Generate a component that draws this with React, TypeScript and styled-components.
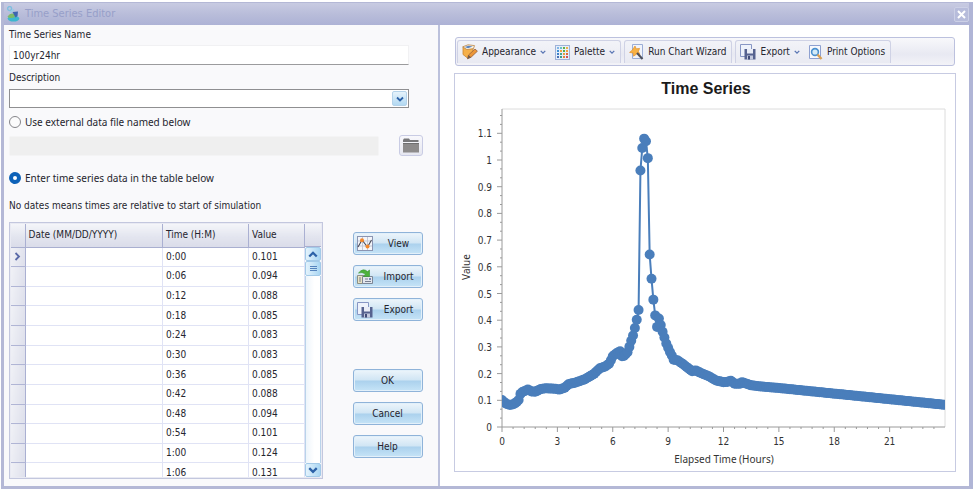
import React from "react";
import styled, { createGlobalStyle, css } from "styled-components";

const GlobalStyle = createGlobalStyle`
  *, *::before, *::after { box-sizing: border-box; }
  body { margin: 0; background: #fff; }
  body, button, input { font-family: "DejaVu Sans Condensed", "DejaVu Sans", sans-serif; font-size: 10px; line-height: 14px; color: #25252e; }
`;

const Page = styled.div`
  min-height: 100vh;
  display: flex;
  padding: 2px 2px 1px 1px;
`;

const Window = styled.main`
  flex: 1;
  min-width: 0;
  display: flex;
  flex-direction: column;
  border: 1px solid #b4b8d6;
  border-width: 1px 1px 3px 3px;
  border-right: 4px solid #b0b5d6;
  background: #fff;
`;

const TitleBar = styled.header`
  display: flex;
  align-items: center;
  gap: 4px;
  height: 22px;
  padding: 0 0 0 2px;
  background: linear-gradient(#c8cbe2, #b9bdda 50%, #adb2d5);
`;

const Title = styled.h1`
  flex: 1;
  margin: 0;
  font-size: 11px;
  line-height: 16px;
  font-weight: 400;
  color: #979fc9;
`;

const CloseButton = styled.button`
  display: grid;
  place-items: center;
  width: 15px;
  height: 15px;
  padding: 0;
  border: 1px solid #ccd0e6;
  border-radius: 2px;
  background: #b7bcdb;
`;

const Body = styled.div`
  flex: 1;
  display: flex;
  min-height: 0;
`;

const EditorPane = styled.section`
  flex: 0 0 436px;
  display: flex;
  flex-direction: column;
  padding: 2px 13px 7px 5px;
  border-right: 2px solid #bcc1dc;
  background: #f9f9fb;
`;

const ChartPane = styled.section`
  flex: 1;
  min-width: 0;
  display: flex;
  flex-direction: column;
  gap: 7px;
  padding: 12px 13px 14px 14px;
  background: #fff;
`;

const FieldLabel = styled.label`
  display: flex;
  align-items: center;
  height: 16px;
`;

const NameInput = styled.input`
  width: 400px;
  height: 20px;
  margin: 2px 0 5px;
  padding: 0 3px;
  border: 1px solid #f1f1f3;
  border-bottom-color: #9b9b9d;
  background: #fff;
`;

const Combo = styled.div`
  display: flex;
  align-items: center;
  width: 400px;
  height: 19px;
  margin: 3px 0 5px;
  border: 1px solid #8f8f91;
  background: #fff;
`;

const ComboInput = styled.input`
  flex: 1;
  height: 100%;
  padding: 0 3px;
  border: 0;
  background: transparent;
`;

const ComboButton = styled.button`
  display: grid;
  place-items: center;
  width: 15px;
  height: 15px;
  margin-right: 1px;
  padding: 0;
  border: 1px solid #b4d3ea;
  border-radius: 2px;
  background: linear-gradient(#e6f3fb, #b3d9f2);
`;

const RadioLabel = styled.label`
  display: flex;
  align-items: center;
  gap: 4px;
  height: 18px;
  font-family: "Noto Sans", sans-serif;
`;

const Radio = styled.input`
  appearance: none;
  width: 12px;
  height: 12px;
  margin: 0;
  border: 1px solid #85858a;
  border-radius: 50%;
  background: #fbfbfc;
  &:checked {
    border: 4px solid #0d62b8;
    background: #fff;
  }
`;

const FileRow = styled.div`
  display: flex;
  align-items: center;
  gap: 20px;
  margin: 4px 0 13px;
`;

const FileInput = styled.input`
  width: 370px;
  height: 20px;
  border: 1px solid #f4f4f5;
  border-radius: 2px;
  background: #efefef;
`;

const FolderButton = styled.button`
  display: grid;
  place-items: center;
  width: 24px;
  height: 21px;
  padding: 0;
  border: 1px solid #c9cce4;
  border-radius: 3px;
  background: linear-gradient(#f8f8fc, #e6e7f0);
`;

const Note = styled.p`
  margin: 12px 0 9px;
`;

const DataArea = styled.div`
  display: flex;
  gap: 30px;
  align-items: flex-start;
`;

const GridFrame = styled.div`
  display: flex;
  width: 314px;
  height: 257px;
  padding: 1px;
  border: 1px solid #c3c7de;
  background: #e9eaf3;
`;

const GridView = styled.div`
  flex: 1;
  overflow: hidden;
`;

const Table = styled.table`
  width: 100%;
  height: 259px;
  border-collapse: collapse;
  table-layout: fixed;
  background: #fff;
`;

const HeadCell = styled.th<{ $w?: number }>`
  width: ${(p) => (p.$w ? `${p.$w}px` : "auto")};
  height: 23px;
  padding: 0 3px;
  text-align: left;
  font-weight: 400;
  border-right: 1px solid #aab0d2;
  border-bottom: 1px solid #a9afd0;
  background: linear-gradient(#f4f5f9, #e3e5ef 55%, #dadce9);
`;

const Cell = styled.td`
  padding: 0 3px;
  line-height: 12px;
  border-right: 1px solid #e0e3f5;
  border-bottom: 1px solid #e0e3f5;
`;

const MarkCell = styled.th`
  padding: 0;
  border-right: 1px solid #aab0d2;
  border-bottom: 1px solid #b0b5d5;
  background: linear-gradient(100deg, #f0f1f6, #dddfeb);
  line-height: 0;
  text-align: center;
`;

const ScrollColumn = styled.div`
  display: flex;
  flex-direction: column;
  width: 16px;
  background: #fff;
`;

const ScrollHead = styled.div`
  height: 23px;
  border-bottom: 1px solid #a9afd0;
  background: linear-gradient(#f4f5f9, #e3e5ef 55%, #dadce9);
`;

const ScrollTrack = styled.div`
  flex: 1;
  border: 1px solid #b9d3ea;
  border-width: 0 1px;
  background: linear-gradient(90deg, #eef5fb, #fff 60%);
`;

const scrollFace = css`
  display: grid;
  place-items: center;
  width: 100%;
  padding: 0;
  border: 1px solid #a3cae8;
  border-radius: 2px;
  background: linear-gradient(90deg, #e4f3fc, #a9d6f3);
`;

const ScrollButton = styled.button`
  ${scrollFace}
  height: 14px;
`;

const ScrollThumb = styled.div`
  ${scrollFace}
  height: 15px;
`;

const ButtonColumn = styled.div`
  display: flex;
  flex-direction: column;
  gap: 10px;
  padding-top: 10px;
`;

const ButtonGroup = styled.div`
  display: flex;
  flex-direction: column;
  gap: 10px;
  & + & { margin-top: 38px; }
`;

const PushButton = styled.button`
  display: flex;
  align-items: center;
  justify-content: center;
  width: 70px;
  height: 23px;
  padding: 0 4px 0 3px;
  border: 1px solid #8fb3d9;
  border-radius: 3px;
  box-shadow: inset 0 0 0 1px #e2f0fa;
  background: linear-gradient(#edf5fb, #d0e5f4 48%, #abd1ed 52%, #c6e4f7);
`;

const ButtonText = styled.span`
  flex: 1;
  padding-left: 6px;
  text-align: center;
`;

const Toolbar = styled.div`
  display: flex;
  gap: 3px;
  height: 29px;
  margin: 0 1px;
  padding: 2px 2px 2px 1px;
  border: 1px solid #bcc1de;
  border-radius: 3px;
  background: linear-gradient(#f8f8fb, #e8e9f2 60%, #f3f3f8);
`;

const ToolGroup = styled.div`
  display: flex;
  align-items: center;
  gap: 9px;
  padding: 0 5px 0 4px;
  border: 1px solid #cfd2e5;
  border-width: 1px 1px 0 1px;
  border-radius: 3px 3px 0 0;
  background: linear-gradient(#f2f3f8, #e9eaf2);
`;

const ToolButton = styled.button`
  display: flex;
  align-items: center;
  gap: 4px;
  padding: 0;
  border: 0;
  background: none;
  white-space: nowrap;
`;

const ChartFrame = styled.div`
  flex: 1;
  border: 1px solid #c7cbe2;
  background: #fff;
`;

const ChartSvg = styled.svg`
  display: block;
  width: 100%;
  height: auto;
  font-family: "DejaVu Sans Condensed", "DejaVu Sans", sans-serif;
  font-size: 10px;
  fill: #333;
`;

const ChartTitle = styled.text`
  font-family: "Liberation Sans", Arial, sans-serif;
  font-size: 16px;
  font-weight: 700;
  fill: #1b1b1b;
`;

const AxisTitle = styled.text`
  font-family: "Noto Sans", sans-serif;
`;

const Chevron = ({ up = false, size = 6, color = "#5a76b4" }: { up?: boolean; size?: number; color?: string }) => (
  <svg width={size} height={size} viewBox="0 0 8 8" aria-hidden="true">
    <path d={up ? "M1 6L4 3L7 6" : "M1 2.5L4 5.5L7 2.5"} fill="none" stroke={color} strokeWidth="1.8" />
  </svg>
);

const AppIcon = () => (
  <svg width="15" height="16" viewBox="0 0 15 16" aria-hidden="true">
    <ellipse cx="7.5" cy="12.6" rx="5.8" ry="3" fill="#3db7cf" />
    <path d="M1.5 10.5Q5 5.5 9 8.5Q10 11.5 6 12Q2.5 12.5 1.5 10.5Z" fill="#7cba68" />
    <path d="M6.5 6L12 5.5L11.5 10L9.5 11.5Z" fill="#3c66b0" />
    <circle cx="3.6" cy="2.6" r="2" fill="none" stroke="#7fbfe0" strokeWidth="1.4" />
    <path d="M4 6.5L8 3.5" stroke="#9bcbe6" strokeWidth="1.8" />
  </svg>
);

const FolderIcon = () => (
  <svg width="16" height="15" viewBox="0 0 16 15" aria-hidden="true">
    <path d="M0 2L1 .5H6L7 2H15.5V4H0Z" fill="#78787a" />
    <path d="M0 5H16V14.5H0Z" fill="#8d8b8b" />
    <path d="M0 5.5H16" stroke="#6f6f70" />
  </svg>
);

const ViewIcon = () => (
  <svg width="16" height="16" viewBox="0 0 16 16" aria-hidden="true">
    <rect x=".5" y=".5" width="15" height="14" fill="#f4f5f9" stroke="#8b95b2" />
    <path d="M5.5 1V14M10.5 1V14M1 5H15M1 10H15" stroke="#c3c9d6" />
    <path d="M1 11L5 4L10.5 11L14.5 4" fill="none" stroke="#4c4c58" strokeWidth="1.1" />
    <circle cx="5" cy="4.2" r="2" fill="#f4882a" />
    <circle cx="10.5" cy="10.5" r="2" fill="#f4882a" />
  </svg>
);

const ImportIcon = () => (
  <svg width="16" height="16" viewBox="0 0 16 16" aria-hidden="true">
    <path d="M.5 6.5H7V14.5H.5Z" fill="#e9e3c4" stroke="#8c8f84" />
    <path d="M5.5 7.5H15.5V14.5H5.5Z" fill="#e3e7ee" stroke="#7c8798" />
    <path d="M3 8V13M8 10H11M8 12.5H14" stroke="#777f91" />
    <rect x="12" y="9" width="2" height="2" fill="#7687b8" />
    <path d="M1.5 4Q6 -1.5 10.5 2.6L12.5 1V7.5H6.5L8.5 5.1Q5 2.6 1.5 4Z" fill="#4db23c" stroke="#35942f" strokeWidth=".6" />
  </svg>
);

const ExportIcon = () => (
  <svg width="16" height="16" viewBox="0 0 16 16" aria-hidden="true">
    <path d="M.5 .5H11.5V12.5H.5Z" fill="#eef2fb" stroke="#8796c4" />
    <path d="M4.5 5H15L15.5 5.5V15.5H4.5Z" fill="#56628f" />
    <path d="M7 5H13V9.5H7Z" fill="#e9ecf6" />
    <path d="M7 11.5H13V15.5H7Z" fill="#c3c9de" />
    <rect x="8" y="12" width="2" height="3.5" fill="#414c78" />
  </svg>
);

const AppearanceIcon = () => (
  <svg width="16" height="16" viewBox="0 0 16 16" aria-hidden="true">
    <path d="M1 3V10.5L5.5 14L11 11V3Z" fill="#f5b04a" stroke="#c98530" strokeWidth=".8" />
    <path d="M.7 2.8L6 .8L12.5 1.6L11.5 4.6L5 5.6Z" fill="#fbf3e2" stroke="#ba8448" strokeWidth=".8" />
    <path d="M2.6 2.9L6.5 1.7L10.6 2.4L6 4.2Z" fill="#5a83bf" />
    <path d="M5.5 14.8L6.5 11L13 5L15.4 7.2L9 13.3Z" fill="#ec9637" stroke="#96603c" strokeWidth=".8" />
    <path d="M5.5 14.8L6.5 11L9 13.3Z" fill="#6d5a4e" />
  </svg>
);

const paletteColors = [
  "#7fb5e6", "#6cc0c4", "#5fb04c", "#f0b04a",
  "#3d8fd6", "#f2a03c", "#57ab48", "#f2a03c",
  "#3d7fc8", "#4aa38f", "#e8a03c", "#e0683a",
  "#4a6fb4", "#3f9a88", "#e2823a", "#d05060",
];

const PaletteIcon = () => (
  <svg width="15" height="15" viewBox="0 0 15 15" aria-hidden="true">
    <rect x=".5" y=".5" width="14" height="14" fill="#e6effa" stroke="#9fb2d8" />
    {paletteColors.map((c, i) => (
      <rect key={i} x={2 + (i % 4) * 3} y={2 + Math.floor(i / 4) * 3} width="2" height="2" fill={c} />
    ))}
  </svg>
);

const WizardIcon = () => (
  <svg width="15" height="16" viewBox="0 0 15 16" aria-hidden="true">
    <path d="M3.5 .5H13.5V14.5H3.5Z" fill="#f0f3fb" stroke="#9badd6" />
    <path d="M6 2L7.2 4.8L10.6 4.4L9.4 7.4L11 10.4L7.6 10L4.6 12.2L4.2 9L.6 8.4L3.4 6Z" fill="#f8b144" stroke="#e0902c" strokeWidth=".7" />
    <path d="M8 9L13.5 15" stroke="#4d4f5a" strokeWidth="2" />
  </svg>
);

const PrintIcon = () => (
  <svg width="14" height="15" viewBox="0 0 14 15" aria-hidden="true">
    <path d="M.5 .5H11.5V13.5H.5Z" fill="#f8f9fd" stroke="#8ea0d0" />
    <circle cx="6" cy="7" r="3.4" fill="#d3ebf9" stroke="#4a90cf" strokeWidth="1.6" />
    <path d="M8.5 9.5L12.5 14" stroke="#d9a055" strokeWidth="2.4" />
  </svg>
);

const rows: [string, string][] = [
  ["0:00", "0.101"], ["0:06", "0.094"], ["0:12", "0.088"], ["0:18", "0.085"],
  ["0:24", "0.083"], ["0:30", "0.083"], ["0:36", "0.085"], ["0:42", "0.088"],
  ["0:48", "0.094"], ["0:54", "0.101"], ["1:00", "0.124"], ["1:06", "0.131"],
];

const knots: [number, number][] = [
  [0, 0.101], [0.1, 0.094], [0.2, 0.088], [0.3, 0.085], [0.4, 0.083], [0.5, 0.083], [0.6, 0.085], [0.7, 0.088],
  [0.8, 0.094], [0.9, 0.101], [1, 0.124], [1.1, 0.131], [1.4, 0.14], [1.6, 0.133], [1.8, 0.132], [2.1, 0.142],
  [2.4, 0.145], [2.9, 0.143], [3.1, 0.14], [3.4, 0.147], [3.6, 0.16], [4, 0.167], [4.5, 0.179], [5, 0.2],
  [5.3, 0.22], [5.6, 0.227], [5.8, 0.237], [5.9, 0.25], [6, 0.265], [6.2, 0.276], [6.4, 0.284], [6.5, 0.265],
  [6.6, 0.266], [6.8, 0.28], [6.9, 0.3], [7, 0.323], [7.1, 0.343], [7.2, 0.371], [7.3, 0.402], [7.4, 0.438],
  [7.5, 0.961], [7.6, 1.045], [7.7, 1.08], [7.8, 1.07], [7.9, 1.007], [8, 0.646], [8.1, 0.555], [8.2, 0.477],
  [8.3, 0.418], [8.4, 0.375], [8.5, 0.406], [8.6, 0.382], [8.7, 0.357], [8.8, 0.335], [8.9, 0.313], [9, 0.297],
  [9.1, 0.281], [9.2, 0.268], [9.3, 0.252], [9.5, 0.25], [9.8, 0.236], [10, 0.225], [10.3, 0.209], [10.5, 0.212],
  [10.8, 0.201], [11.2, 0.19], [11.6, 0.174], [12, 0.168], [12.2, 0.169], [12.4, 0.173], [12.6, 0.162],
  [12.9, 0.162], [13, 0.168], [13.5, 0.156], [14, 0.152], [15, 0.146], [18, 0.125], [21, 0.104], [24, 0.083],
];

function valueAt(t: number) {
  const i = Math.max(1, knots.findIndex(([x]) => x >= t - 1e-6));
  const [x0, y0] = knots[i - 1];
  const [x1, y1] = knots[i];
  return y0 + ((t - x0) / (x1 - x0)) * (y1 - y0);
}

const plot = { left: 47, right: 490, top: 35, bottom: 353, unit: 267 };
const px = (t: number) => plot.left + (t / 24) * (plot.right - plot.left);
const py = (v: number) => plot.bottom - v * plot.unit;
const points = Array.from({ length: 241 }, (_, i) => [px(i / 10), py(valueAt(i / 10))]);

const Chart = () => (
  <ChartSvg viewBox="0 0 500 397" role="img" aria-label="Time Series">
    <ChartTitle x="251" y="20" textAnchor="middle">Time Series</ChartTitle>
    <path d={`M${plot.left} ${plot.top}H${plot.right}V${plot.bottom}`} fill="none" stroke="#dcdcdc" />
    <path d={`M${plot.left} ${plot.top}V${plot.bottom}H${plot.right}`} fill="none" stroke="#9a9a9a" />
    {Array.from({ length: 12 }, (_, i) => (
      <g key={i}>
        <path d={`M${plot.left - 5} ${py(i / 10)}h5`} stroke="#9a9a9a" />
        <path d={`M${plot.left - 2} ${py(i / 10 + 1 / 30)}h2M${plot.left - 2} ${py(i / 10 + 2 / 30)}h2`} stroke="#9a9a9a" />
        <text x="37" y={py(i / 10) + 4} textAnchor="end">{i / 10}</text>
      </g>
    ))}
    {Array.from({ length: 40 }, (_, i) => (
      <path key={i} d={`M${px(i * 0.6)} ${plot.bottom}v${i % 5 ? 2 : 5}`} stroke="#9a9a9a" />
    ))}
    {Array.from({ length: 8 }, (_, i) => (
      <text key={i} x={px(i * 3)} y="371" textAnchor="middle">{i * 3}</text>
    ))}
    <AxisTitle x="269" y="389" textAnchor="middle">Elapsed Time (Hours)</AxisTitle>
    <AxisTitle transform="translate(15 193) rotate(-90)" textAnchor="middle">Value</AxisTitle>
    <clipPath id="plotClip">
      <rect x={plot.left} y={plot.top} width={plot.right - plot.left} height={plot.bottom - plot.top} />
    </clipPath>
    <g clipPath="url(#plotClip)">
      <polyline points={points.map((p) => p.join(",")).join(" ")} fill="none" stroke="#4a7ebb" strokeWidth="2" />
      {points.map(([x, y], i) => (
        <circle key={i} cx={x} cy={y} r="5" fill="#4a7ebb" />
      ))}
    </g>
  </ChartSvg>
);

export default function App() {
  return (
    <>
      <GlobalStyle />
      <Page>
        <Window>
          <TitleBar>
            <AppIcon />
            <Title>Time Series Editor</Title>
            <CloseButton aria-label="Close">
              <svg width="9" height="9" viewBox="0 0 9 9" aria-hidden="true">
                <path d="M1 1L8 8M8 1L1 8" stroke="#fff" strokeWidth="2" />
              </svg>
            </CloseButton>
          </TitleBar>
          <Body>
            <EditorPane>
              <FieldLabel htmlFor="name">Time Series Name</FieldLabel>
              <NameInput id="name" defaultValue="100yr24hr" />
              <FieldLabel htmlFor="description">Description</FieldLabel>
              <Combo>
                <ComboInput id="description" />
                <ComboButton aria-label="Open description"><Chevron size={8} color="#2c62a8" /></ComboButton>
              </Combo>
              <RadioLabel>
                <Radio type="radio" name="source" value="file" />
                Use external data file named below
              </RadioLabel>
              <FileRow>
                <FileInput aria-label="External data file" disabled />
                <FolderButton aria-label="Browse"><FolderIcon /></FolderButton>
              </FileRow>
              <RadioLabel>
                <Radio type="radio" name="source" value="table" defaultChecked />
                Enter time series data in the table below
              </RadioLabel>
              <Note>No dates means times are relative to start of simulation</Note>
              <DataArea>
                <GridFrame>
                  <GridView>
                    <Table>
                      <thead>
                        <tr>
                          <HeadCell $w={14} aria-label="Row" />
                          <HeadCell>Date (MM/DD/YYYY)</HeadCell>
                          <HeadCell $w={86}>Time (H:M)</HeadCell>
                          <HeadCell $w={56}>Value</HeadCell>
                        </tr>
                      </thead>
                      <tbody>
                        {rows.map(([time, value], i) => (
                          <tr key={time}>
                            <MarkCell scope="row">
                              {i === 0 && (
                                <svg width="7" height="9" viewBox="0 0 7 9" aria-label="Current row">
                                  <path d="M1.5 1L5 4.5L1.5 8" fill="none" stroke="#5a6aa8" strokeWidth="1.8" />
                                </svg>
                              )}
                            </MarkCell>
                            <Cell />
                            <Cell>{time}</Cell>
                            <Cell>{value}</Cell>
                          </tr>
                        ))}
                      </tbody>
                    </Table>
                  </GridView>
                  <ScrollColumn>
                    <ScrollHead />
                    <ScrollButton aria-label="Scroll up"><Chevron up size={10} color="#2c62a8" /></ScrollButton>
                    <ScrollThumb>
                      <svg width="7" height="6" viewBox="0 0 7 6" aria-hidden="true">
                        <path d="M0 .5H7M0 2.5H7M0 4.5H7" stroke="#5583bd" />
                      </svg>
                    </ScrollThumb>
                    <ScrollTrack />
                    <ScrollButton aria-label="Scroll down"><Chevron size={10} color="#2c62a8" /></ScrollButton>
                  </ScrollColumn>
                </GridFrame>
                <ButtonColumn>
                  <ButtonGroup>
                    <PushButton><ViewIcon /><ButtonText>View</ButtonText></PushButton>
                    <PushButton><ImportIcon /><ButtonText>Import</ButtonText></PushButton>
                    <PushButton><ExportIcon /><ButtonText>Export</ButtonText></PushButton>
                  </ButtonGroup>
                  <ButtonGroup>
                    <PushButton>OK</PushButton>
                    <PushButton>Cancel</PushButton>
                    <PushButton>Help</PushButton>
                  </ButtonGroup>
                </ButtonColumn>
              </DataArea>
            </EditorPane>
            <ChartPane>
              <Toolbar role="toolbar" aria-label="Chart tools">
                <ToolGroup>
                  <ToolButton><AppearanceIcon />Appearance<Chevron /></ToolButton>
                  <ToolButton><PaletteIcon />Palette<Chevron /></ToolButton>
                </ToolGroup>
                <ToolGroup>
                  <ToolButton><WizardIcon />Run Chart Wizard</ToolButton>
                </ToolGroup>
                <ToolGroup>
                  <ToolButton><ExportIcon />Export<Chevron /></ToolButton>
                  <ToolButton><PrintIcon />Print Options</ToolButton>
                </ToolGroup>
              </Toolbar>
              <ChartFrame><Chart /></ChartFrame>
            </ChartPane>
          </Body>
        </Window>
      </Page>
    </>
  );
}
